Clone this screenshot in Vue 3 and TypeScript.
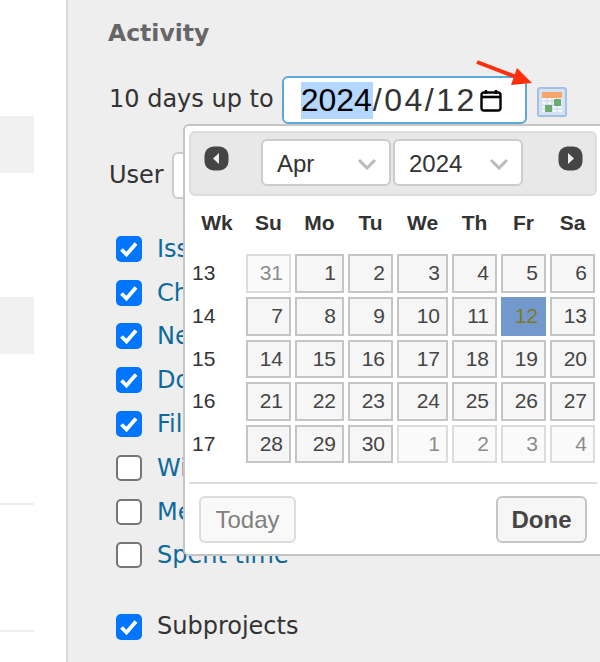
<script setup lang="ts">
interface Day {
  n: number;
  muted?: boolean;
  current?: boolean;
}

const dayNames = ['Wk', 'Su', 'Mo', 'Tu', 'We', 'Th', 'Fr', 'Sa'];

const mk = (start: number, end: number, muted = false): Day[] => {
  const out: Day[] = [];
  for (let n = start; n <= end; n++) out.push({ n, muted, current: !muted && n === 12 });
  return out;
};

const weeks = [
  { wk: 13, days: [...mk(31, 31, true), ...mk(1, 6)] },
  { wk: 14, days: mk(7, 13) },
  { wk: 15, days: mk(14, 20) },
  { wk: 16, days: mk(21, 27) },
  { wk: 17, days: [...mk(28, 30), ...mk(1, 4, true)] },
];

const rowHeights = [39, 39, 38, 39, 38];

const filters = [
  { label: 'Issues', on: true },
  { label: 'Changesets', on: true },
  { label: 'News', on: true },
  { label: 'Documents', on: true },
  { label: 'Files', on: true },
  { label: 'Wiki edits', on: false },
  { label: 'Messages', on: false },
  { label: 'Spent time', on: false },
];
</script>

<template>
  <div class="page">
    <div class="content">
      <div class="band band-a"></div>
      <div class="band band-b"></div>
      <div class="rule rule-a"></div>
      <div class="rule rule-b"></div>
    </div>

    <aside class="sidebar">
      <h3>Activity</h3>

      <div class="date-row">
        <span class="row-label">10 days up to</span>
        <div class="date-input">
          <span class="seg-year">2024</span><span class="seg">/04/12</span>
          <svg class="cal-glyph" width="22" height="23" viewBox="0 0 22 23">
            <path d="M6 1v4M16 1v4" stroke="#000" stroke-width="2.4" />
            <rect x="1.5" y="3.5" width="19" height="18" rx="2.5" fill="none" stroke="#000" stroke-width="2.4" />
            <path d="M1.5 8h19" stroke="#000" stroke-width="2.6" />
          </svg>
        </div>
        <svg class="cal-btn" width="30" height="30" viewBox="0 0 30 30">
          <rect x="1" y="1" width="28" height="28" rx="2" fill="#d5e2f3" stroke="#a5c0e2" stroke-width="2" />
          <rect x="5" y="5" width="20" height="20" fill="#f4f7fb" />
          <rect x="5" y="5" width="20" height="6" fill="#f9a468" />
          <path d="M5 14h20M5 18h20M5 22h20M10 11v14M15 11v14M20 11v14" stroke="#c3d3e8" stroke-width="1" />
          <rect x="8" y="18" width="7" height="7" fill="#67ad6f" />
          <rect x="17" y="12" width="7" height="7" fill="#67ad6f" />
        </svg>
      </div>

      <div class="user-row">
        <span class="row-label">User</span>
        <div class="user-select"></div>
      </div>

      <ul class="filters">
        <li v-for="f in filters" :key="f.label">
          <span class="check" :class="{ on: f.on }">
            <svg v-if="f.on" width="26" height="26" viewBox="0 0 26 26">
              <path d="M5.500 13.500l5 5 9.500-11" fill="none" stroke="#fff" stroke-width="3.800" />
            </svg>
          </span>
          <a href="#">{{ f.label }}</a>
        </li>
      </ul>

      <div class="sub-row">
        <span class="check on">
          <svg width="26" height="26" viewBox="0 0 26 26">
            <path d="M5.500 13.500l5 5 9.500-11" fill="none" stroke="#fff" stroke-width="3.800" />
          </svg>
        </span>
        <span class="row-label">Subprojects</span>
      </div>

      <!-- annotation arrow drawn over the screenshot -->
      <svg class="arrow" width="64" height="32" viewBox="0 0 64 32">
        <path d="M1 2l42 16" stroke="#ff2f0e" stroke-width="4" />
        <path d="M56 23L41 8 35 25z" fill="#ff2f0e" />
      </svg>

      <div class="picker">
        <div class="picker-head">
          <span class="nav">
            <svg width="25" height="25" viewBox="0 0 25 25">
              <rect x="0.5" y="0.5" width="24" height="24" rx="9" fill="#454545" />
              <path d="M15 7v11l-6-5.500z" fill="#eee" />
            </svg>
          </span>
          <div class="selects">
            <div class="fake-select">
              <span>Apr</span>
              <svg width="20" height="12" viewBox="0 0 20 12"><path d="M2 2l8 8 8-8" fill="none" stroke="#bbb" stroke-width="3" /></svg>
            </div>
            <div class="fake-select">
              <span>2024</span>
              <svg width="20" height="12" viewBox="0 0 20 12"><path d="M2 2l8 8 8-8" fill="none" stroke="#bbb" stroke-width="3" /></svg>
            </div>
          </div>
          <span class="nav nav-next">
            <svg width="25" height="25" viewBox="0 0 25 25">
              <rect x="0.5" y="0.5" width="24" height="24" rx="9" fill="#454545" />
              <path d="M10 7v11l6-5.500z" fill="#eee" />
            </svg>
          </span>
        </div>

        <div class="cal-grid">
          <div v-for="d in dayNames" :key="d" class="dow">{{ d }}</div>
          <template v-for="(w, i) in weeks" :key="w.wk">
            <div class="wk" :style="{ height: rowHeights[i] + 'px' }">{{ w.wk }}</div>
            <div
              v-for="d in w.days"
              :key="d.n"
              class="day"
              :class="{ muted: d.muted, current: d.current }"
              :style="{ height: rowHeights[i] + 'px' }"
            >
              {{ d.n }}
            </div>
          </template>
        </div>

        <div class="picker-foot">
          <button class="btn today" type="button">Today</button>
          <button class="btn done" type="button">Done</button>
        </div>
      </div>
    </aside>
  </div>
</template>

<style>
html,
body {
  margin: 0;
  overflow: hidden;
  background: #fff;
}
</style>

<style scoped>
.page {
  display: flex;
  width: 600px;
  height: 662px;
  overflow: hidden;
  font-family: "DejaVu Sans", sans-serif;
}

.content {
  width: 66px;
  flex: none;
  display: flex;
  flex-direction: column;
}

.band {
  width: 34px;
  height: 57px;
  background: #f1f1f1;
}

.band-a {
  margin-top: 116px;
}

.band-b {
  margin-top: 124px;
}

.rule {
  width: 34px;
  height: 2px;
  background: #eee;
}

.rule-a {
  margin-top: 149px;
}

.rule-b {
  margin-top: 125px;
}

.sidebar {
  position: relative;
  flex: 1;
  background: #eee;
  border-left: 2px solid #d9d9d9;
  padding-left: 41px;
  color: #333;
  font-size: 24px;
}

.row-label {
  margin-top: -2px;
}

h3 {
  margin: 18px 0 0 -1px;
  height: 31px;
  line-height: 31px;
  font-size: 23.500px;
  font-weight: 700;
  color: #666;
}

.date-row {
  display: flex;
  align-items: center;
  margin-top: 27px;
  height: 48px;
}

.date-input {
  width: 245px;
  height: 48px;
  box-sizing: border-box;
  margin-left: 8px;
  border: 2px solid #5aa9dc;
  border-radius: 6px;
  background: #fff;
  padding-left: 17px;
  display: flex;
  align-items: center;
  font-family: "Liberation Sans", sans-serif;
  font-size: 32px;
  color: #333;
}

.seg-year {
  background: #b3d7ff;
  color: #000;
  line-height: 37px;
  padding-right: 1px;
}

.seg {
  letter-spacing: 2.500px;
}

.cal-glyph {
  margin-left: 3px;
}

.cal-btn {
  margin-left: 10px;
  margin-top: 4px;
}

.user-row {
  display: flex;
  align-items: center;
  gap: 9px;
  margin-top: 28px;
  height: 47px;
}

.user-select {
  width: 120px;
  height: 47px;
  box-sizing: border-box;
  margin-left: -1px;
  border: 2px solid #ccc;
  border-radius: 6px;
  background: #fff;
}

.filters {
  list-style: none;
  margin: 28px 0 0 7px;
  padding: 0;
}

.filters li,
.sub-row {
  display: flex;
  align-items: center;
  gap: 15px;
  height: 43.800px;
}

.filters a {
  color: #0f6a9c;
  text-decoration: none;
}

.sub-row {
  margin: 28px 0 0 7px;
}

.check {
  width: 26px;
  height: 26px;
  flex: none;
  box-sizing: border-box;
  border: 2px solid #767676;
  border-radius: 5px;
  background: #fff;
}

.check.on {
  border: none;
  background: #0075ff;
}

.check svg {
  display: block;
}

.arrow {
  position: absolute;
  left: 408px;
  top: 60px;
}

.picker {
  position: absolute;
  left: 115px;
  top: 124px;
  width: 423px;
  height: 432px;
  box-sizing: border-box;
  border: 2px solid #c5c5c5;
  border-radius: 6px;
  background: #fff;
  padding: 5px 7px 5px 4px;
  font-family: "Liberation Sans", sans-serif;
  color: #333;
}

.picker-head {
  display: flex;
  align-items: center;
  height: 65px;
  box-sizing: border-box;
  border: 2px solid #ddd;
  border-radius: 6px;
  background: #e8e8e8;
  padding: 0 12px 0 13px;
}

.nav {
  display: block;
  height: 25px;
  margin-top: -10px;
}

.nav-next {
  margin-left: auto;
}

.nav svg {
  display: block;
}

.selects {
  display: flex;
  gap: 2px;
  margin-left: 32px;
  margin-top: -2px;
}

.fake-select {
  width: 130px;
  height: 47px;
  box-sizing: border-box;
  border: 2px solid #ccc;
  border-radius: 6px;
  background: #fff;
  display: flex;
  align-items: center;
  justify-content: space-between;
  padding: 3px 12px 0 14px;
  font-size: 24px;
}

.cal-grid {
  display: grid;
  grid-template-columns: 50px 45px 49px 45px 51px 45px 45px 45px;
  column-gap: 4px;
  row-gap: 4px;
  margin-left: 3px;
}

.dow {
  height: 54px;
  display: flex;
  align-items: center;
  justify-content: center;
  font-size: 21px;
  font-weight: 700;
}

.wk {
  display: flex;
  align-items: center;
  padding-bottom: 1px;
  box-sizing: border-box;
  font-size: 21px;
}

.day {
  box-sizing: border-box;
  border: 2px solid #c5c5c5;
  background: #f6f6f6;
  color: #454545;
  font-size: 21px;
  display: flex;
  align-items: center;
  justify-content: flex-end;
  padding: 0 6px 1px 0;
}

.day.muted {
  border-color: #dcdcdc;
  background: #fafafa;
  color: #8c8c8c;
}

.day.current {
  border-color: #7399cc;
  background: #7399cc;
  color: #7b7a2b;
}

.picker-foot {
  display: flex;
  justify-content: space-between;
  margin-top: 19px;
  border-top: 2px solid #ddd;
  padding: 12px 10px 0;
}

.btn {
  height: 47px;
  box-sizing: border-box;
  border: 2px solid #c5c5c5;
  border-radius: 6px;
  background: #f6f6f6;
  font-family: "Liberation Sans", sans-serif;
  font-size: 24px;
  color: #454545;
}

.btn.today {
  width: 97px;
  border-color: #dcdcdc;
  background: #f9f9f9;
  color: #808080;
}

.btn.done {
  width: 91px;
  font-weight: 700;
}
</style>
